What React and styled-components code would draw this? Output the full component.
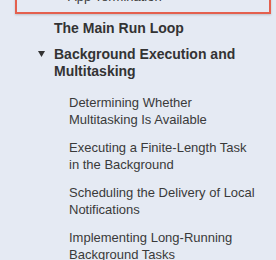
import React from "react";
import styled, { createGlobalStyle } from "styled-components";

const GlobalStyle = createGlobalStyle`
  html, body {
    margin: 0;
    padding: 0;
    background: #e5eaf3;
    overflow: hidden;
  }
  body {
    font-family: "Liberation Sans", Arial, sans-serif;
    color: #333;
  }
`;

const Nav = styled.nav`
  display: flex;
  flex-direction: column;
  width: 276px;
  height: 260px;
  overflow: hidden;
`;

const Current = styled.div`
  margin: -20px 5px 0 15px;
  padding: 6px 0 6px 51px;
  border: 2px solid #e4604e;
  box-shadow: 0 1px 2px rgba(0, 0, 0, 0.18);
  font-size: 13px;
  line-height: 18px;
  color: #3a3a3a;
`;

const Chapter = styled.div`
  display: flex;
  margin-top: ${(p) => p.$top}px;
  padding-left: 34px;
  font-size: 14px;
  font-weight: bold;
  line-height: 17px;
  color: #333;
`;

const Marker = styled.span`
  box-sizing: border-box;
  flex: 0 0 20px;
  display: flex;
  padding-top: 5px;
  padding-left: 4px;
`;

const Title = styled.span`
  flex: 1;
  padding-right: 20px;
`;

const Sections = styled.ul`
  list-style: none;
  margin: 14px 0 0;
  padding: 0 8px 0 69px;
  display: flex;
  flex-direction: column;
  gap: 11px;
`;

const Section = styled.li`
  font-size: 13px;
  line-height: 17px;
  color: #3a3a3a;
`;

const Triangle = () => (
  <svg width="7" height="6" viewBox="0 0 7 6">
    <path d="M0 0 L7 0 L3.5 6 Z" fill="#333" />
  </svg>
);

const sections = [
  ["Determining Whether", "Multitasking Is Available"],
  ["Executing a Finite-Length Task", "in the Background"],
  ["Scheduling the Delivery of Local", "Notifications"],
  ["Implementing Long-Running", "Background Tasks"],
];

export default function App() {
  return (
    <>
      <GlobalStyle />
      <Nav>
        <Current>App Termination</Current>
        <Chapter $top={6}>
          <Marker />
          <Title>The Main Run Loop</Title>
        </Chapter>
        <Chapter $top={9}>
          <Marker>
            <Triangle />
          </Marker>
          <Title>Background Execution and Multitasking</Title>
        </Chapter>
        <Sections>
          {sections.map(([a, b]) => (
            <Section key={a}>
              {a}
              <br />
              {b}
            </Section>
          ))}
        </Sections>
      </Nav>
    </>
  );
}
